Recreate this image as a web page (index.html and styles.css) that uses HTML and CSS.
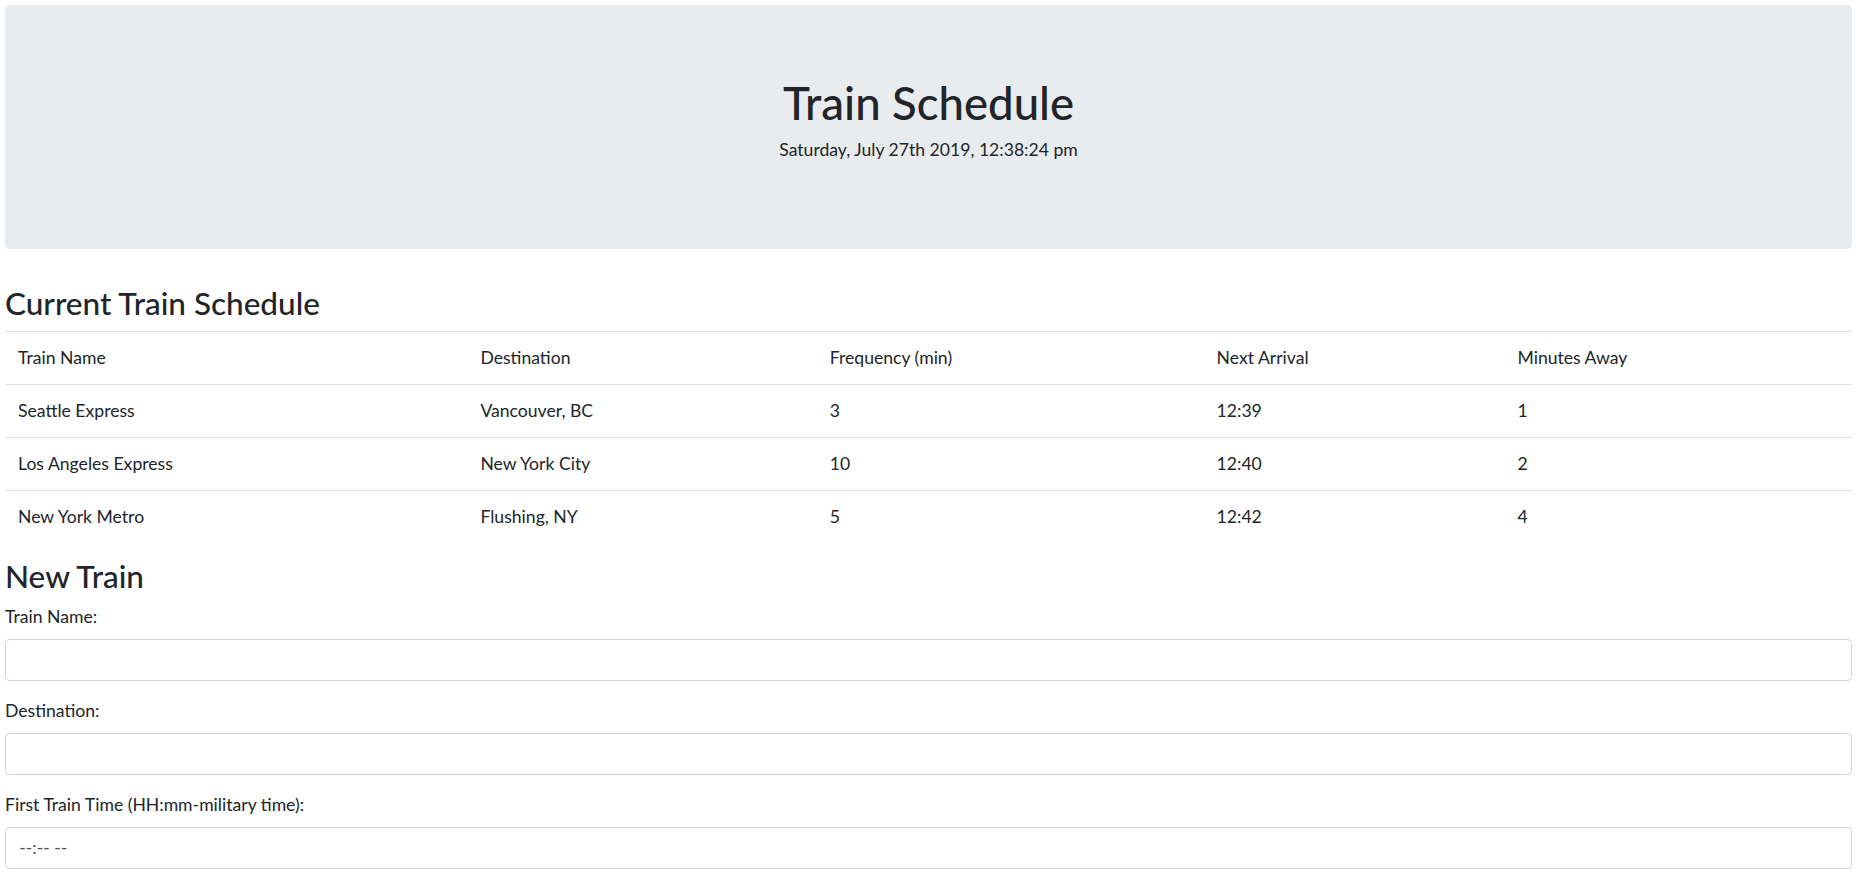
FILE: index.html
```html
<!DOCTYPE html>
<html lang="en">
<head>
<meta charset="utf-8">
<title>Train Schedule</title>
<link rel="stylesheet" href="styles.css">
</head>
<body>
<div class="container">
  <header class="jumbotron">
    <h1 class="title">Train Schedule</h1>
    <p class="clock">Saturday, July 27th 2019, 12:38:24 pm</p>
  </header>

  <h3 class="section-title">Current Train Schedule</h3>
  <table class="schedule">
    <tr>
      <td class="col-name">Train Name</td>
      <td class="col-dest">Destination</td>
      <td class="col-freq">Frequency (min)</td>
      <td class="col-next">Next Arrival</td>
      <td class="col-away">Minutes Away</td>
    </tr>
    <tr>
      <td>Seattle Express</td>
      <td>Vancouver, BC</td>
      <td>3</td>
      <td>12:39</td>
      <td>1</td>
    </tr>
    <tr>
      <td>Los Angeles Express</td>
      <td>New York City</td>
      <td>10</td>
      <td>12:40</td>
      <td>2</td>
    </tr>
    <tr>
      <td>New York Metro</td>
      <td>Flushing, NY</td>
      <td>5</td>
      <td>12:42</td>
      <td>4</td>
    </tr>
  </table>

  <h3 class="section-title form-title">New Train</h3>
  <form class="train-form">
    <div class="form-group">
      <label class="form-label" for="name">Train Name:</label>
      <input class="form-control" id="name" type="text">
    </div>
    <div class="form-group">
      <label class="form-label" for="dest">Destination:</label>
      <input class="form-control" id="dest" type="text">
    </div>
    <div class="form-group">
      <label class="form-label" for="first">First Train Time (HH:mm-military time):</label>
      <input class="form-control time-input" id="first" type="text" placeholder="--:-- --">
    </div>
  </form>
</div>
</body>
</html>
```
FILE: styles.css
```css
html {
  font-size: 17.6px;
}

body {
  margin: 0;
  padding: 5px 8px 0 5px;
  font-family: Lato, "Open Sans", "Liberation Sans", sans-serif;
  font-size: 1rem;
  line-height: 1.5;
  color: #212529;
  background: #fff;
}

.container {
  display: flex;
  flex-direction: column;
}

.jumbotron {
  background: #e9ecef;
  border-radius: 5px;
  padding: 71px 2rem 86px;
  text-align: center;
  margin-bottom: 36px;
}

.title {
  margin: 0 0 8px;
  font-size: 45.5px;
  font-weight: 500;
  line-height: 53px;
}

.clock {
  margin: 0;
  font-size: 17.6px;
  font-weight: 400;
  line-height: 26.4px;
}

.section-title {
  margin: 0 0 9px;
  font-size: 31.5px;
  font-weight: 500;
  line-height: 37px;
}

.schedule {
  width: 100%;
  table-layout: fixed;
  border-collapse: collapse;
  margin-bottom: 15px;
}

.schedule td {
  padding: 13px 13px;
  line-height: 26px;
  border-top: 1px solid #dee2e6;
  text-align: left;
  vertical-align: top;
  font-weight: 400;
}

.col-name { width: 25.39%; }
.col-dest { width: 18.84%; }
.col-freq { width: 21.01%; }
.col-next { width: 16.03%; }
.col-away { width: 18.73%; }

.train-form {
  display: flex;
  flex-direction: column;
}

.form-group {
  display: flex;
  flex-direction: column;
  margin-bottom: 17.6px;
}

.form-label {
  line-height: 26.4px;
  margin-bottom: 8px;
}

.form-control {
  box-sizing: border-box;
  height: 42px;
  padding: 6.6px 13.2px;
  font-family: inherit;
  font-size: 1rem;
  color: #495057;
  background: #fff;
  border: 1px solid #ced4da;
  border-radius: 4.4px;
  outline: none;
}

.time-input::placeholder {
  color: #495057;
  opacity: 1;
}
```
